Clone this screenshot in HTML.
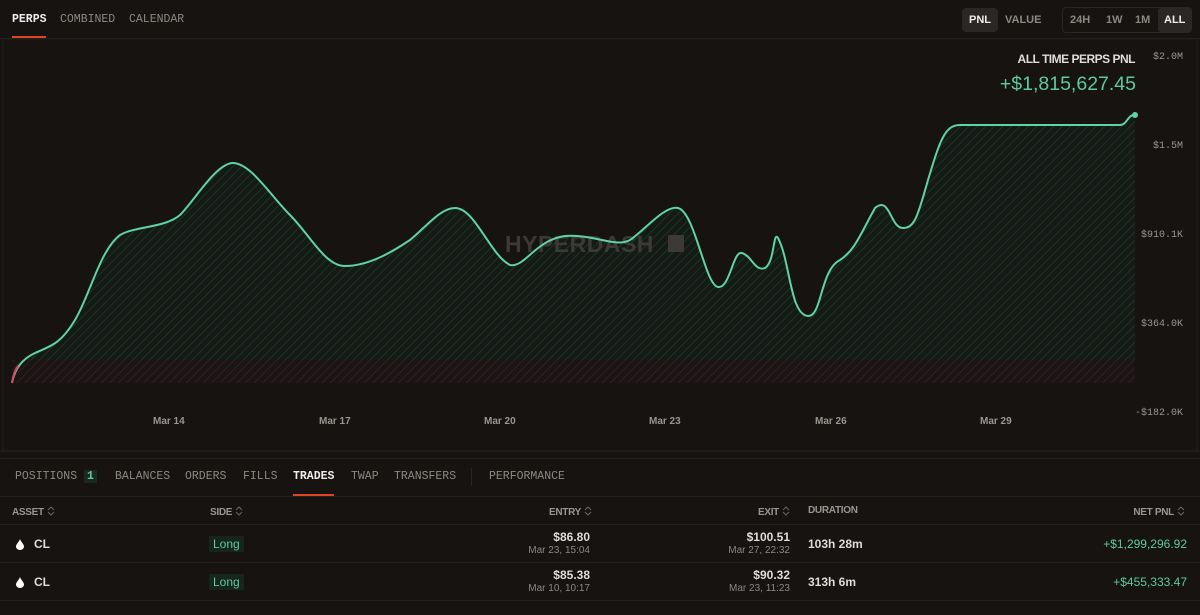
<!DOCTYPE html>
<html><head><meta charset="utf-8"><style>
*{box-sizing:border-box;margin:0;padding:0}
body{width:1200px;height:615px;background:#161311;color:#ddd;font-family:"Liberation Sans",sans-serif;position:relative;overflow:hidden}
.a{position:absolute;white-space:nowrap}
.mono{font-family:"Liberation Mono",monospace}
.tab{font-size:11.5px;color:#8c8782}
.hdr{font-size:10px;color:#9a9590;font-weight:bold;letter-spacing:-0.3px}
.hdr svg{vertical-align:-2px;margin-left:3px}
.ax{font-size:10px;color:#9a9590}
.sel{font-size:11px;font-weight:bold;color:#8c8782}
.drop{position:absolute;width:8px;height:11px}
</style></head><body>
<div class="a mono tab" style="left:12px;top:13px;color:#eee;font-weight:bold">PERPS</div>
<div class="a" style="left:12px;top:36px;width:34px;height:2px;background:#d9461f"></div>
<div class="a mono tab" style="left:60px;top:13px">COMBINED</div>
<div class="a mono tab" style="left:129px;top:13px">CALENDAR</div>
<div class="a" style="left:0;top:38px;width:1200px;height:1px;background:#26221f"></div>

<div class="a" style="left:962px;top:8px;width:36px;height:24px;background:#2a2725;border-radius:4px"></div>
<div class="a sel" style="left:969px;top:14px;color:#eee">PNL</div>
<div class="a sel" style="left:1005px;top:14px">VALUE</div>
<div class="a" style="left:1062px;top:7px;width:130px;height:26px;border:1px solid #2a2725;border-radius:4px"></div>
<div class="a" style="left:1158px;top:8px;width:33px;height:24px;background:#2a2725;border-radius:3px"></div>
<div class="a sel" style="left:1070px;top:14px">24H</div>
<div class="a sel" style="left:1106px;top:14px">1W</div>
<div class="a sel" style="left:1135px;top:14px">1M</div>
<div class="a sel" style="left:1164px;top:14px;color:#eee">ALL</div>

<div class="a" style="right:65px;top:52px;font-size:12px;font-weight:bold;color:#ddd;letter-spacing:-0.5px">ALL TIME PERPS PNL</div>
<div class="a" style="right:64px;top:73px;font-size:19.5px;color:#5fc99a">+$1,815,627.45</div>

<div class="a mono ax" style="left:1153px;top:52px">$2.0M</div>
<div class="a mono ax" style="left:1153px;top:141px">$1.5M</div>
<div class="a mono ax" style="left:1141px;top:230px">$910.1K</div>
<div class="a mono ax" style="left:1141px;top:319px">$364.0K</div>
<div class="a mono ax" style="left:1135px;top:408px">-$182.0K</div>

<svg class="a" style="left:0;top:0" width="1200" height="460">
<defs>
<pattern id="hg" width="6" height="6" patternUnits="userSpaceOnUse" patternTransform="rotate(45)"><rect width="6" height="6" fill="#141a15"/><line x1="0" y1="0" x2="0" y2="6" stroke="#233a2c" stroke-width="1.5"/></pattern>
<pattern id="hr" width="6" height="6" patternUnits="userSpaceOnUse" patternTransform="rotate(45)"><rect width="6" height="6" fill="#1a1414"/><line x1="0" y1="0" x2="0" y2="6" stroke="#3a2226" stroke-width="1.5"/></pattern>
</defs>
<rect x="3" y="39" width="1194" height="412" fill="none" stroke="#211e1b"/>
<line x1="0" y1="451" x2="1200" y2="451" stroke="#2a2623"/>
<path id="c" d="M12,383 C14,372 20,360 35,353 C50,346 60,345 75,320 C90,295 100,250 120,235 C135,226 165,228 180,215 C195,200 215,165 232,163 C250,162 270,195 290,215 C310,235 325,266 345,266 C370,266 395,250 410,240 C425,228 440,208 455,208 C475,208 490,255 510,265 C525,268 535,240 565,236 C595,234 615,248 630,240 C645,230 665,205 678,208 C695,212 705,285 718,287 C730,289 733,250 742,253 C752,256 755,272 765,268 C775,262 773,230 778,238 C790,260 790,315 808,316 C822,317 820,270 840,260 C855,250 860,235 875,208 C890,195 890,228 903,228 C915,228 918,215 928,180 C940,140 945,125 960,125 L1120,125 C1127,125 1128,114 1135,115" fill="none"/>
<path d="M12,383 C14,372 20,360 35,353 C50,346 60,345 75,320 C90,295 100,250 120,235 C135,226 165,228 180,215 C195,200 215,165 232,163 C250,162 270,195 290,215 C310,235 325,266 345,266 C370,266 395,250 410,240 C425,228 440,208 455,208 C475,208 490,255 510,265 C525,268 535,240 565,236 C595,234 615,248 630,240 C645,230 665,205 678,208 C695,212 705,285 718,287 C730,289 733,250 742,253 C752,256 755,272 765,268 C775,262 773,230 778,238 C790,260 790,315 808,316 C822,317 820,270 840,260 C855,250 860,235 875,208 C890,195 890,228 903,228 C915,228 918,215 928,180 C940,140 945,125 960,125 L1120,125 C1127,125 1128,114 1135,115 L1135,360 L12,360 Z" fill="url(#hg)"/>
<rect x="12" y="360" width="1123" height="23" fill="url(#hr)"/>
<text x="505" y="252" font-family="Liberation Sans,sans-serif" font-weight="bold" font-size="23" fill="#3c3936" letter-spacing="0.5">HYPERDASH</text>
<rect x="668" y="235" width="16" height="17" fill="#3c3936"/>
<use href="#c" stroke="#5fd3a3" stroke-width="2"/>
<path d="M12,383 C13,375 15,370 18,366" stroke="#d9465c" stroke-width="2" fill="none"/>
<circle cx="1135" cy="115" r="3" fill="#5fd3a3"/>
</svg>
<div class="a ax" style="left:153px;top:416px;font-weight:bold">Mar 14</div>
<div class="a ax" style="left:319px;top:416px;font-weight:bold">Mar 17</div>
<div class="a ax" style="left:484px;top:416px;font-weight:bold">Mar 20</div>
<div class="a ax" style="left:649px;top:416px;font-weight:bold">Mar 23</div>
<div class="a ax" style="left:815px;top:416px;font-weight:bold">Mar 26</div>
<div class="a ax" style="left:980px;top:416px;font-weight:bold">Mar 29</div>

<div class="a" style="left:0;top:458px;width:1200px;height:1px;background:#221f1c"></div>
<div class="a mono tab" style="left:15px;top:470px">POSITIONS <span style="color:#5fc99a;font-weight:bold;background:#1a2a22;padding:0 3px">1</span></div>
<div class="a mono tab" style="left:115px;top:470px">BALANCES</div>
<div class="a mono tab" style="left:185px;top:470px">ORDERS</div>
<div class="a mono tab" style="left:243px;top:470px">FILLS</div>
<div class="a mono tab" style="left:293px;top:470px;color:#eee;font-weight:bold">TRADES</div>
<div class="a" style="left:293px;top:494px;width:41px;height:2px;background:#d9461f"></div>
<div class="a mono tab" style="left:351px;top:470px">TWAP</div>
<div class="a mono tab" style="left:394px;top:470px">TRANSFERS</div>
<div class="a" style="left:471px;top:468px;width:1px;height:18px;background:#2a2623"></div>
<div class="a mono tab" style="left:489px;top:470px">PERFORMANCE</div>
<div class="a" style="left:0;top:496px;width:1200px;height:1px;background:#221f1c"></div>

<div class="a hdr" style="left:12px;top:505px">ASSET<svg width="8" height="12"><path d="M1,5 L4,2 L7,5 M1,7 L4,10 L7,7" stroke="#6a6560" fill="none"/></svg></div>
<div class="a hdr" style="left:210px;top:505px">SIDE<svg width="8" height="12"><path d="M1,5 L4,2 L7,5 M1,7 L4,10 L7,7" stroke="#6a6560" fill="none"/></svg></div>
<div class="a hdr" style="right:608px;top:505px">ENTRY<svg width="8" height="12"><path d="M1,5 L4,2 L7,5 M1,7 L4,10 L7,7" stroke="#6a6560" fill="none"/></svg></div>
<div class="a hdr" style="right:410px;top:505px">EXIT<svg width="8" height="12"><path d="M1,5 L4,2 L7,5 M1,7 L4,10 L7,7" stroke="#6a6560" fill="none"/></svg></div>
<div class="a hdr" style="left:808px;top:505px">DURATION</div>
<div class="a hdr" style="right:15px;top:505px">NET PNL<svg width="8" height="12"><path d="M1,5 L4,2 L7,5 M1,7 L4,10 L7,7" stroke="#6a6560" fill="none"/></svg></div>
<div class="a" style="left:0;top:524px;width:1200px;height:1px;background:#221f1c"></div>
<div class="a" style="left:0;top:562px;width:1200px;height:1px;background:#221f1c"></div>
<div class="a" style="left:0;top:600px;width:1200px;height:1px;background:#221f1c"></div>

<svg class="drop" style="left:16px;top:539px" viewBox="0 0 8 11"><path d="M4,0 C5,3 8,5 8,7.5 A4,3.5 0 0 1 0,7.5 C0,5 3,3 4,0Z" fill="#fff"/></svg>
<div class="a" style="left:34px;top:537px;font-size:12px;font-weight:bold;color:#ddd">CL</div>
<div class="a" style="left:209px;top:536px;font-size:12px;color:#5fc99a;background:#16251d;padding:1px 4px">Long</div>
<div class="a" style="right:610px;top:530px;font-size:12px;font-weight:bold;color:#ddd;text-align:right">$86.80</div>
<div class="a" style="right:610px;top:545px;font-size:10px;color:#8c8782">Mar 23, 15:04</div>
<div class="a" style="right:410px;top:530px;font-size:12px;font-weight:bold;color:#ddd">$100.51</div>
<div class="a" style="right:410px;top:545px;font-size:10px;color:#8c8782">Mar 27, 22:32</div>
<div class="a" style="left:808px;top:537px;font-size:12px;font-weight:bold;color:#ddd">103h 28m</div>
<div class="a" style="right:13px;top:537px;font-size:12px;color:#5fc99a">+$1,299,296.92</div>

<svg class="drop" style="left:16px;top:577px" viewBox="0 0 8 11"><path d="M4,0 C5,3 8,5 8,7.5 A4,3.5 0 0 1 0,7.5 C0,5 3,3 4,0Z" fill="#fff"/></svg>
<div class="a" style="left:34px;top:575px;font-size:12px;font-weight:bold;color:#ddd">CL</div>
<div class="a" style="left:209px;top:574px;font-size:12px;color:#5fc99a;background:#16251d;padding:1px 4px">Long</div>
<div class="a" style="right:610px;top:568px;font-size:12px;font-weight:bold;color:#ddd">$85.38</div>
<div class="a" style="right:610px;top:583px;font-size:10px;color:#8c8782">Mar 10, 10:17</div>
<div class="a" style="right:410px;top:568px;font-size:12px;font-weight:bold;color:#ddd">$90.32</div>
<div class="a" style="right:410px;top:583px;font-size:10px;color:#8c8782">Mar 23, 11:23</div>
<div class="a" style="left:808px;top:575px;font-size:12px;font-weight:bold;color:#ddd">313h 6m</div>
<div class="a" style="right:13px;top:575px;font-size:12px;color:#5fc99a">+$455,333.47</div>
</body></html>
